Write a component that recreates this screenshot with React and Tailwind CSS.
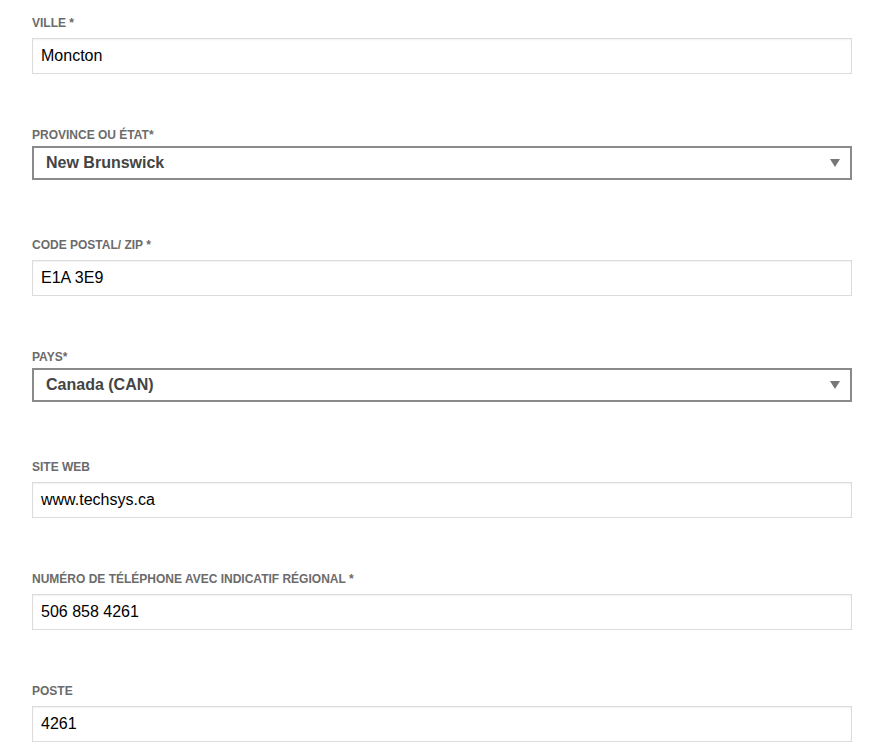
const fields = [
    { label: 'VILLE *', value: 'Moncton' },
    { label: 'PROVINCE OU ÉTAT*', value: 'New Brunswick', select: true },
    { label: 'CODE POSTAL/ ZIP *', value: 'E1A 3E9' },
    { label: 'PAYS*', value: 'Canada (CAN)', select: true },
    { label: 'SITE WEB', value: 'www.techsys.ca' },
    { label: 'NUMÉRO DE TÉLÉPHONE AVEC INDICATIF RÉGIONAL *', value: '506 858 4261' },
    { label: 'POSTE', value: '4261' },
]

function Field({ label, value, select }) {
    return (
        <div className={select ? 'mb-[56px]' : 'mb-[52px]'}>
            <label className="block h-[17px] pt-px text-[12px] font-bold leading-4 text-[#6b6b6b]">{label}</label>
            {select ? (
                <div className="mt-[3px] flex h-[34px] items-center justify-between border-2 border-[#8a8a8a] bg-white pl-3 pr-[10px]">
                    <span className="text-[16px] font-bold text-[#444]">{value}</span>
                    <svg width="10" height="8" viewBox="0 0 10 8">
                        <path d="M0 0 H10 L5 8 Z" fill="#777" />
                    </svg>
                </div>
            ) : (
                <div className="mt-[7px] flex h-9 items-center border border-[#dcdcdc] bg-white px-2 shadow-[inset_0_1px_2px_rgba(0,0,0,0.06)]">
                    <span className="text-[16px] text-black">{value}</span>
                </div>
            )}
        </div>
    )
}

export default function App() {
    return (
        <div className="min-h-[745px] bg-white pl-8 pt-[14px] font-['Liberation_Sans',Arial,sans-serif]">
            <div className="w-[820px]">
                {fields.map((f) => (
                    <Field key={f.label} {...f} />
                ))}
            </div>
        </div>
    )
}
